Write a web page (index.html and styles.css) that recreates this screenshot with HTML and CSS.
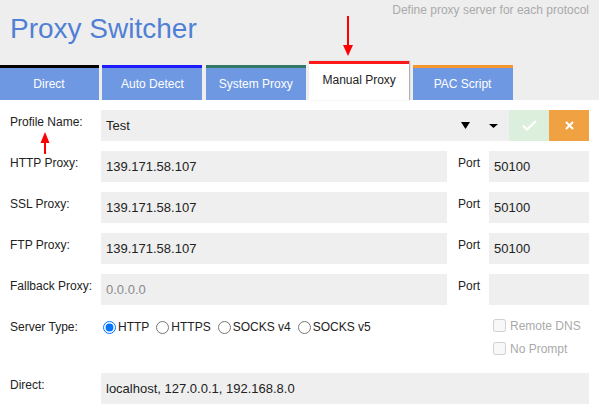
FILE: index.html
```html
<!DOCTYPE html>
<html>
<head>
<meta charset="utf-8">
<link rel="stylesheet" href="styles.css">
</head>
<body>
<div class="header">
  <div class="top">
    <h1 class="title">Proxy Switcher</h1>
    <div class="subtitle">Define proxy server for each protocol</div>
  </div>
  <div class="tabs">
    <div class="tab t-direct">Direct</div>
    <div class="tab t-auto">Auto Detect</div>
    <div class="tab t-system">System Proxy</div>
    <div class="tab t-manual active">Manual Proxy</div>
    <div class="tab t-pac">PAC Script</div>
  </div>
</div>

<div class="form">
  <div class="row">
    <div class="lbl">Profile Name:</div>
    <div class="field profile">
      <span>Test</span>
      <svg class="arr1" width="9" height="7" viewBox="0 0 9 7"><polygon points="0,0 9,0 4.5,7" fill="#000"/></svg>
      <svg class="arr2" width="9" height="4" viewBox="0 0 9 4"><polygon points="0,0 9,0 4.5,4" fill="#000"/></svg>
    </div>
    <div class="btn ok"><svg width="15" height="11" viewBox="0 0 15 11"><polyline points="1,5.5 5,9.5 14,1" fill="none" stroke="#fff" stroke-width="2.2"/></svg></div>
    <div class="btn cancel"><svg width="9" height="9" viewBox="0 0 9 9"><path d="M1 1 L8 8 M8 1 L1 8" stroke="#fff" stroke-width="2"/></svg></div>
  </div>

  <div class="row">
    <div class="lbl">HTTP Proxy:</div>
    <div class="field host">139.171.58.107</div>
    <div class="port-lbl">Port</div>
    <div class="field port">50100</div>
  </div>

  <div class="row">
    <div class="lbl">SSL Proxy:</div>
    <div class="field host">139.171.58.107</div>
    <div class="port-lbl">Port</div>
    <div class="field port">50100</div>
  </div>

  <div class="row">
    <div class="lbl">FTP Proxy:</div>
    <div class="field host">139.171.58.107</div>
    <div class="port-lbl">Port</div>
    <div class="field port">50100</div>
  </div>

  <div class="row">
    <div class="lbl">Fallback Proxy:</div>
    <div class="field host placeholder">0.0.0.0</div>
    <div class="port-lbl">Port</div>
    <div class="field port"></div>
  </div>

  <div class="row server">
    <div class="lbl">Server Type:</div>
    <div class="radios">
      <label class="opt"><input type="radio" name="t" checked>HTTP</label>
      <label class="opt"><input type="radio" name="t">HTTPS</label>
      <label class="opt"><input type="radio" name="t">SOCKS v4</label>
      <label class="opt"><input type="radio" name="t">SOCKS v5</label>
    </div>
    <div class="checks">
      <label class="chk"><input type="checkbox" disabled>Remote DNS</label>
      <label class="chk"><input type="checkbox" disabled>No Prompt</label>
    </div>
  </div>

  <div class="row">
    <div class="lbl">Direct:</div>
    <div class="field wide">localhost, 127.0.0.1, 192.168.8.0</div>
  </div>
</div>

<svg class="arrow arrow-down" width="12" height="42" viewBox="0 0 12 42">
  <rect x="5" y="0" width="2" height="32" fill="#f00"/>
  <polygon points="1,29 11,29 6,40" fill="#f00"/>
</svg>
<svg class="arrow arrow-up" width="12" height="24" viewBox="0 0 12 24">
  <polygon points="1.5,11 10.5,11 6,0" fill="#f00"/>
  <rect x="5" y="9" width="2" height="13" fill="#f00"/>
</svg>
</body>
</html>
```

FILE: styles.css
```css
html, body {
  margin: 0;
  padding: 0;
}
body {
  width: 599px;
  height: 410px;
  overflow: hidden;
  background: #fff;
  font-family: "Liberation Sans", Arial, sans-serif;
  color: #222;
  position: relative;
}

.header {
  background: #eeeeee;
  height: 100px;
  display: flex;
  flex-direction: column;
}
.top {
  height: 58px;
  padding: 3px 10px 0 10px;
  display: flex;
  justify-content: space-between;
  align-items: flex-start;
}
.title {
  margin: 10px 0 0 0;
  font-size: 28px;
  line-height: 32px;
  font-weight: normal;
  color: #5080d5;
}
.subtitle {
  font-size: 12px;
  line-height: 14px;
  color: #aaaaaa;
}

.tabs {
  height: 39px;
  display: flex;
  align-items: flex-end;
  gap: 3.4px;
  margin-left: -1px;
}
.tab {
  width: 100px;
  height: 32px;
  border-top: 3px solid #000;
  background: #6e98e2;
  color: #fff;
  font-size: 12px;
  display: flex;
  align-items: center;
  justify-content: center;
  box-sizing: content-box;
}
.t-direct { border-top-color: #000; }
.t-auto { border-top-color: #1c1cff; }
.t-system { border-top-color: #337766; }
.t-pac { border-top-color: #f7962e; }
.tab.active {
  background: #fff;
  color: #222;
  border-top-color: #ff1a1a;
  height: 32px;
  padding-bottom: 4px;
  box-shadow: 1px 0 1px rgba(0, 0, 0, 0.25);
}

.form {
  padding-top: 10px;
}
.row {
  display: flex;
  height: 31px;
  margin-bottom: 10px;
}
.lbl {
  width: 91px;
  padding: 5px 0 0 10px;
  font-size: 12px;
  line-height: 14px;
  color: #222;
}
.field {
  background: #efefef;
  height: 31px;
  box-sizing: border-box;
  padding-left: 5px;
  font-size: 13px;
  color: #222;
  display: flex;
  align-items: center;
}
.profile {
  width: 408px;
  padding-right: 11px;
}
.arr1 {
  margin-left: auto;
}
.arr2 {
  margin-left: 19px;
}
.btn {
  width: 40px;
  height: 31px;
  display: flex;
  align-items: center;
  justify-content: center;
}
.ok { background: #dcefdc; }
.cancel { background: #f0a243; }

.host { width: 346px; }
.placeholder { color: #8a8a8a; }
.port-lbl {
  width: 31px;
  padding: 5px 0 0 11px;
  font-size: 12px;
  line-height: 14px;
}
.port { width: 100px; }
.wide { width: 488px; }

.row.server {
  height: 48px;
}
.radios {
  display: flex;
  align-items: flex-start;
  gap: 5px;
  padding-top: 5px;
}
.opt {
  display: flex;
  align-items: center;
  height: 14px;
  font-size: 12px;
  line-height: 14px;
}
.opt input {
  width: 13px;
  height: 13px;
  margin: 0 2px 0 2px;
}
.checks {
  margin-left: auto;
  width: 96px;
  margin-right: 10px;
  padding-top: 3px;
  display: flex;
  flex-direction: column;
  gap: 8px;
}
.chk {
  display: flex;
  align-items: center;
  height: 15px;
  font-size: 12px;
  color: #aaaaaa;
}
.chk input {
  width: 13px;
  height: 13px;
  margin: 0 4px 0 0;
}

.arrow {
  position: absolute;
}
.arrow-down {
  left: 342px;
  top: 16px;
}
.arrow-up {
  left: 38.5px;
  top: 132px;
}
```
